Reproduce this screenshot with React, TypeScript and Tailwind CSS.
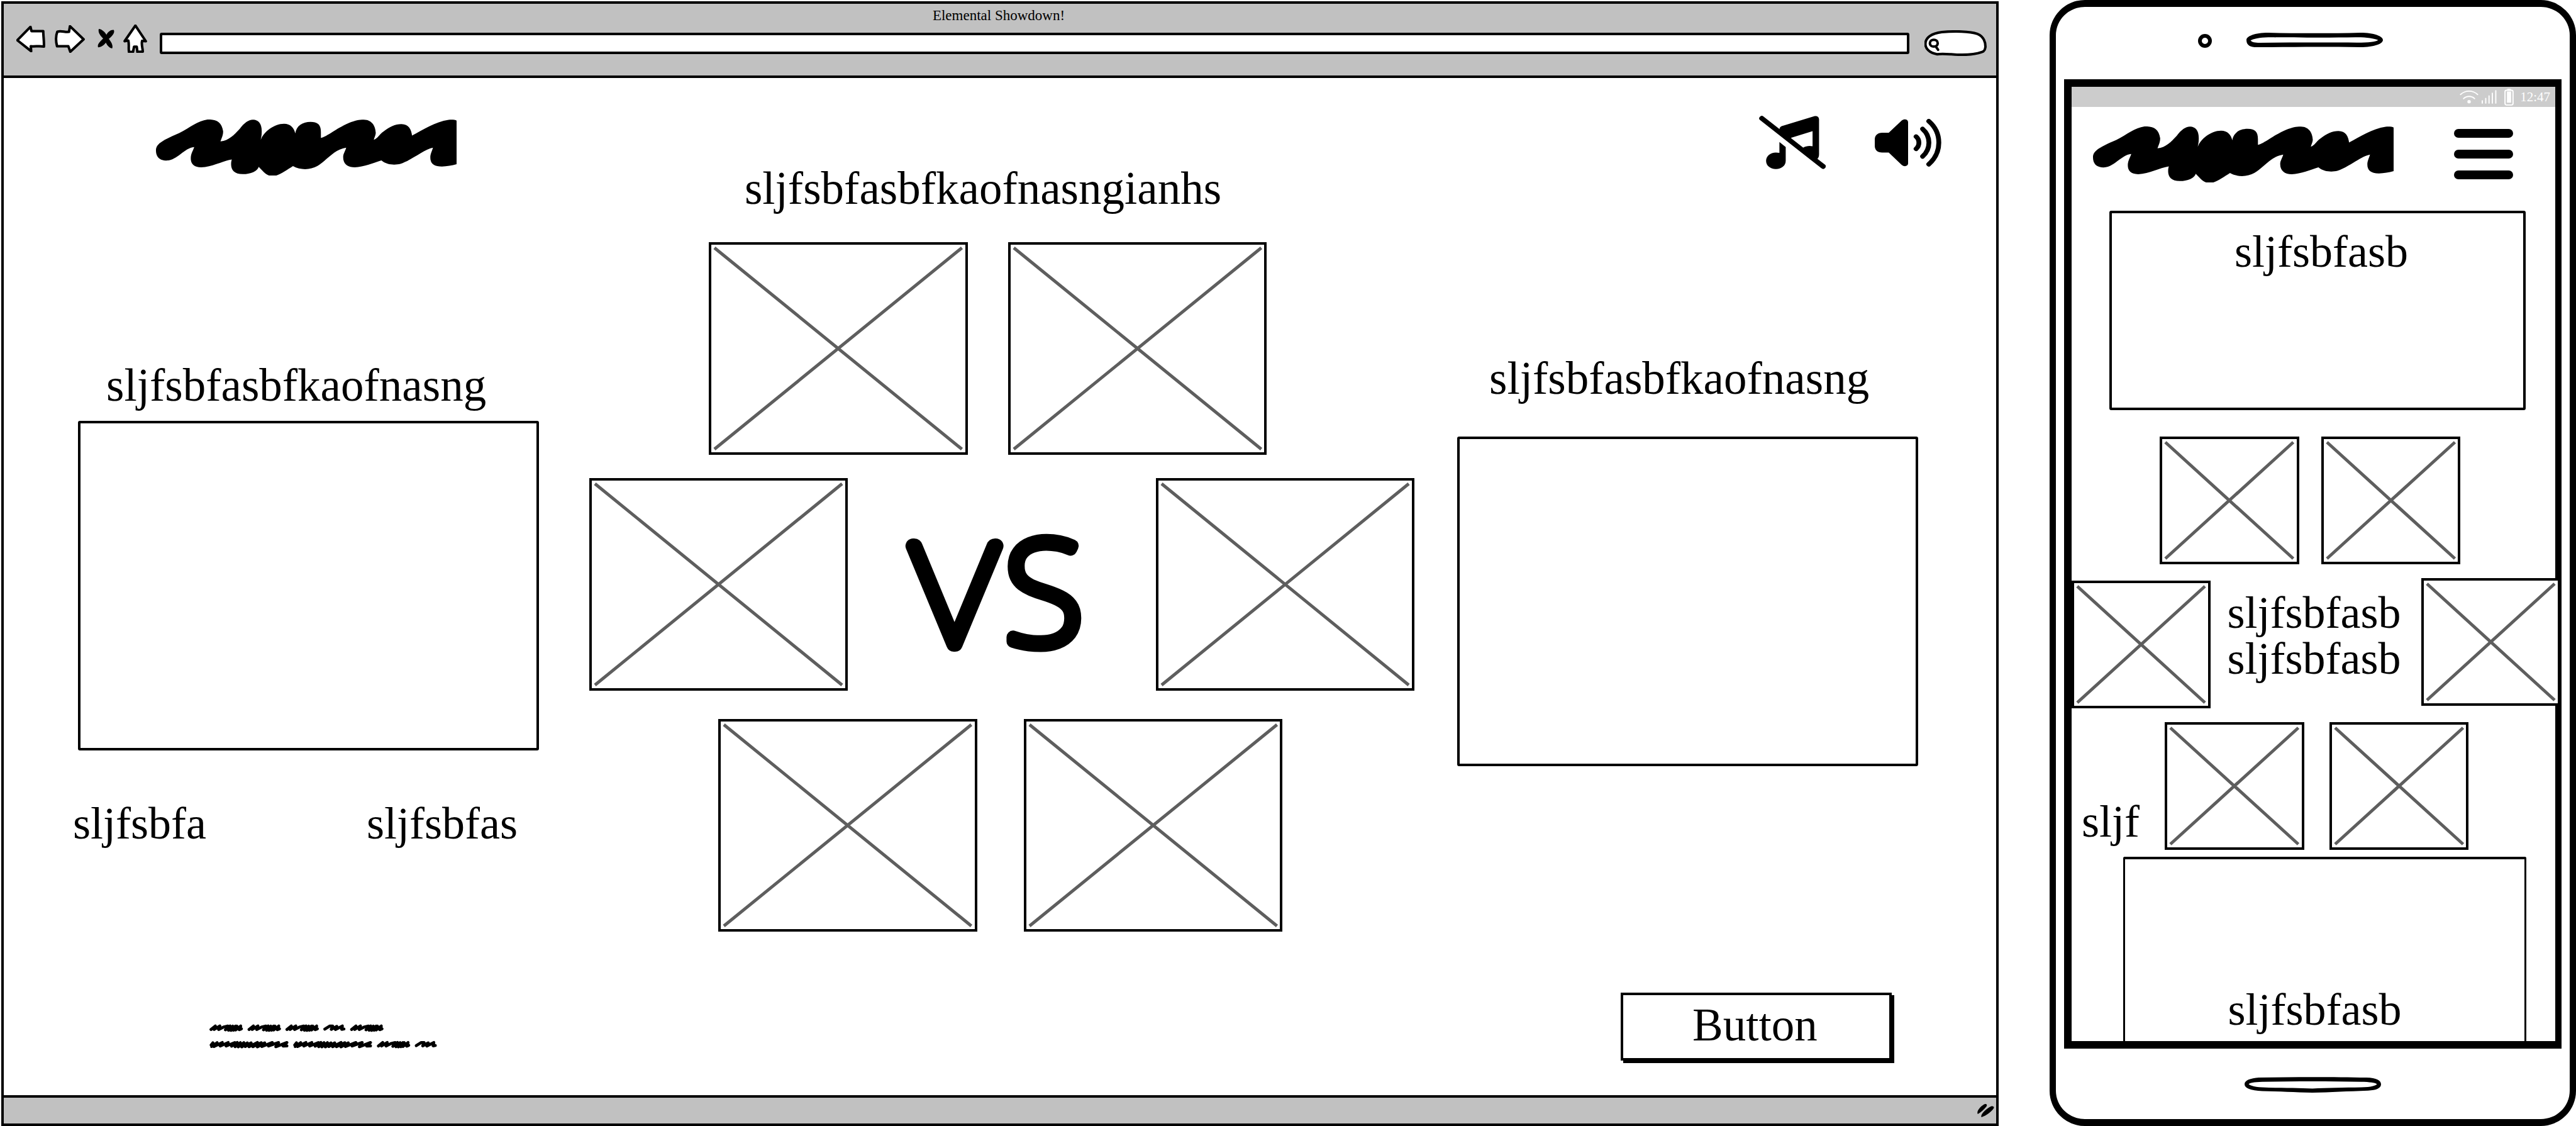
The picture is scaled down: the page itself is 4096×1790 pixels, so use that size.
import React from "react";

const INK = "#000";

function Scribble() {
  return (
    <svg
      className="block h-[89px] w-[478px] shrink-0"
      viewBox="470 692 904 322"
      preserveAspectRatio="none"
      role="img"
      aria-label="Logo"
    >
      <path
        fill={INK}
        d="M470 870C470 835 485 815 540 770C575 735 595 700 625 692C650 690 668 705 672 760C672 785 667 800 664 818C690 812 705 780 722 745C735 712 748 694 762 693C778 694 789 715 788 765C788 785 786 795 785 810C792 765 825 716 855 716C875 716 885 740 889 772C892 730 910 706 935 706C958 706 966 725 966 765C966 780 966 790 966 798C985 790 1010 745 1050 712C1070 697 1080 693 1095 693C1120 694 1130 730 1131 770C1130 785 1127 795 1125 808C1135 805 1140 780 1155 760C1170 735 1190 718 1208 718C1230 718 1238 750 1240 784C1270 755 1310 705 1350 694C1360 692 1370 694 1374 698L1374 949C1360 956 1345 962 1330 962C1305 962 1295 945 1295 910C1295 890 1300 875 1303 854C1275 865 1240 925 1205 947C1190 954 1165 955 1148 927C1125 940 1095 965 1068 967C1045 967 1032 945 1033 905C1033 890 1040 870 1042 854C1005 865 985 925 955 960C935 982 905 985 882 960C865 980 848 1005 832 1014L810 1014C798 1005 790 985 779 964C775 990 755 1006 731 1006C705 1006 695 980 696 945C696 935 697 930 698 922C670 930 640 965 606 967C580 966 573 940 575 905C576 885 583 865 585 850C555 855 535 925 502 928C480 928 470 905 470 870Z"
      />
    </svg>
  );
}

const MEDIUM_WORD =
  "M9 30L34 10L27 30L60 10L53 30L84 15L106 10L92 32L119 10L110 34L134 11L124 35L150 11L138 34L158 11L150 33L180 10L172 31L184 26";
const SHORT_WORD = "M9 28L38 10L54 10L46 29L78 12L70 30L110 10L106 29L119 27";
const LONG_WORD =
  "M10 24L20 12L13 33L44 11L26 33L74 10L62 30L108 10L96 30L146 10L128 31L160 10L148 34L178 11L166 35L198 11L186 35L218 12L206 33L240 12L228 34L276 10L250 34L298 11L276 35L318 12L302 33L362 10L340 30L398 10L382 34L446 10L424 30L446 29";

function ScribbledCopy() {
  const words = [
    { d: MEDIUM_WORD, x: 66, y: 113 },
    { d: MEDIUM_WORD, x: 285, y: 113 },
    { d: MEDIUM_WORD, x: 503, y: 113 },
    { d: SHORT_WORD, x: 721, y: 113 },
    { d: MEDIUM_WORD, x: 875, y: 113 },
    { d: LONG_WORD, x: 66, y: 208 },
    { d: LONG_WORD, x: 547, y: 208 },
    { d: MEDIUM_WORD, x: 1029, y: 208 },
    { d: SHORT_WORD, x: 1247, y: 208 },
  ];
  return (
    <svg className="block h-[39px] w-[362px]" viewBox="66 112 1310 141" role="img" aria-label="Footer note">
      {words.map((w, i) => (
        <path
          key={i}
          d={w.d}
          transform={`translate(${w.x} ${w.y})`}
          fill="none"
          stroke={INK}
          strokeWidth="17"
          strokeLinecap="round"
          strokeLinejoin="round"
        />
      ))}
    </svg>
  );
}

function BackIcon() {
  return (
    <svg className="block h-[42px] w-[46px]" viewBox="50 150 86 150" preserveAspectRatio="none">
      <path
        d="M53 232L92 156L95 180L130 180C130 210 133 240 132 268C118 262 106 269 93 266L94 294Z"
        fill="#fff"
        stroke={INK}
        strokeWidth="4"
        strokeLinejoin="round"
        vectorEffect="non-scaling-stroke"
      />
    </svg>
  );
}

function ForwardIcon() {
  return (
    <svg className="block h-[44px] w-12" viewBox="165 150 91 158" preserveAspectRatio="none">
      <path
        d="M211 156L252 231L212 302L206 270L172 270C168 240 168 210 173 187C185 180 195 191 208 188Z"
        fill="#fff"
        stroke={INK}
        strokeWidth="4"
        strokeLinejoin="round"
        vectorEffect="non-scaling-stroke"
      />
    </svg>
  );
}

function StopIcon() {
  return (
    <svg className="block h-[31px] w-[27px]" viewBox="294 162 51 114" preserveAspectRatio="none">
      <path
        fill={INK}
        d="M298 162C306 163 316 178 321 196C326 178 334 166 343 168C347 184 338 204 328 220C334 236 342 256 338 276C330 274 323 258 319 242C314 256 306 268 296 270C292 254 302 234 311 218C301 200 295 180 298 162Z"
      />
    </svg>
  );
}

function HomeIcon() {
  return (
    <svg className="block h-[45px] w-[38px]" viewBox="372 144 71 163" preserveAspectRatio="none">
      <path
        d="M408 150L439 240L428 238C425 260 430 280 430 300L414 302L412 272L404 272L401 302L389 302C387 280 390 260 387 236L376 240Z"
        fill="#fff"
        stroke={INK}
        strokeWidth="4"
        strokeLinejoin="round"
        vectorEffect="non-scaling-stroke"
      />
    </svg>
  );
}

function SearchPill() {
  return (
    <svg className="block h-[41px] w-[99px]" viewBox="1107 177 333 149" preserveAspectRatio="none">
      <g stroke={INK} strokeLinecap="round" strokeLinejoin="round">
        <path
          d="M1175 316C1130 308 1112 280 1112 257C1112 220 1145 195 1200 188C1270 181 1350 183 1390 198C1425 212 1434 250 1433 275C1430 295 1425 300 1415 303C1370 320 1310 322 1250 316C1220 314 1195 312 1175 316Z"
          fill="#fff"
          strokeWidth="4"
          vectorEffect="non-scaling-stroke"
        />
        <path
          d="M1168 272L1180 290M1136 252C1136 226 1178 226 1178 252C1178 278 1136 278 1136 252Z"
          fill="none"
          strokeWidth="4"
          vectorEffect="non-scaling-stroke"
        />
      </g>
    </svg>
  );
}

function MusicOffIcon() {
  return (
    <svg className="block h-[85px] w-[106px]" viewBox="217 668 360 308" preserveAspectRatio="none">
      <path d="M232 683L563 960" stroke={INK} strokeWidth="28" strokeLinecap="round" />
      <path
        fill={INK}
        d="M327 750C327 735 335 728 345 726L515 671C530 667 541 675 541 690L541 890C541 905 537 912 530 918L500 905L455 852C470 842 490 840 506 844L506 757L388 796L400 810L350 785Z"
      />
      <path
        fill={INK}
        d="M327 819L361 848L361 928C361 955 338 975 308 975C278 975 255 955 255 928C255 900 278 881 308 880L327 882Z"
      />
    </svg>
  );
}

function SpeakerIcon() {
  return (
    <svg className="block h-[76px] w-[106px]" viewBox="840 685 358 275" preserveAspectRatio="none">
      <path
        fill={INK}
        d="M915 765L985 694C998 683 1018 686 1019 703L1019 942C1018 958 998 962 985 950L915 879L880 879C855 879 840 865 840 840L840 804C840 780 855 765 880 765Z"
      />
      <g fill="none" stroke={INK} strokeWidth="26" strokeLinecap="round">
        <path d="M1062 787C1082 805 1082 838 1062 857" />
        <path d="M1097 743C1142 785 1142 858 1097 901" />
        <path d="M1130 698C1202 765 1202 878 1130 946" />
      </g>
    </svg>
  );
}

function ResizeMark() {
  return (
    <svg className="block h-[21px] w-[27px]" viewBox="1441 733 64 75" preserveAspectRatio="none">
      <path
        fill={INK}
        d="M1443 790C1436 775 1455 742 1470 733C1476 732 1480 738 1475 748C1466 766 1454 780 1443 790ZM1457 808C1450 795 1476 756 1493 746C1500 745 1506 748 1503 757C1494 778 1476 798 1457 808Z"
      />
    </svg>
  );
}

function MenuIcon() {
  return (
    <svg className="block h-20 w-[94px]" viewBox="0 0 94 80">
      <rect y="0" width="94" height="14" rx="7" />
      <rect y="33" width="94" height="14" rx="7" />
      <rect y="66" width="94" height="14" rx="7" />
    </svg>
  );
}

function ImageBox({ className }: { className: string }) {
  return (
    <div className={`border-4 border-black bg-white p-[5px] ${className}`} role="img" aria-label="Image placeholder">
      <svg className="block size-full overflow-visible" viewBox="0 0 100 100" preserveAspectRatio="none">
        <path
          d="M0 0L100 100M100 0L0 100"
          stroke="#5e5e5e"
          strokeWidth="5"
          vectorEffect="non-scaling-stroke"
          fill="none"
        />
      </svg>
    </div>
  );
}

function Versus() {
  return (
    <svg
      className="mr-[22px] mt-[92px] block h-[190px] w-[284px] overflow-visible"
      viewBox="0 0 284 190"
      fill={INK}
      stroke={INK}
      strokeLinejoin="round"
      fontWeight="100"
    >
      <text y="172">
        <tspan x="7" fontFamily="Lato, sans-serif" fontSize="222" strokeWidth="24">V</tspan>
        <tspan x="281" textAnchor="end" fontFamily="'Noto Sans', sans-serif" fontSize="226" strokeWidth="21">S</tspan>
      </text>
    </svg>
  );
}

function BrowserWindow() {
  return (
    <section className="flex min-w-0 flex-col border-4 border-black" aria-label="Desktop">
      <header className="border-b-4 border-black bg-[#c1c1c1] pb-6">
        <h1 className="pr-1 pt-[3px] text-center text-[23px] leading-[32px]">Elemental Showdown!</h1>
        <div className="flex h-[55px] items-center pl-5 pr-[15px]">
          <a href="#back" aria-label="Back" className="-mt-3.5"><BackIcon /></a>
          <a href="#forward" aria-label="Forward" className="-mt-3.5 ml-[15px]"><ForwardIcon /></a>
          <button type="button" aria-label="Stop" className="-mt-3.5 ml-5"><StopIcon /></button>
          <a href="#home" aria-label="Home" className="-mt-3.5 ml-[14px]"><HomeIcon /></a>
          <input
            type="text"
            aria-label="Address"
            className="ml-5 h-[34px] min-w-0 flex-1 rounded-[3px] border-4 border-black bg-white px-3 text-[21px] outline-none"
          />
          <button type="button" aria-label="Search" className="ml-6"><SearchPill /></button>
        </div>
      </header>

      <main className="grid flex-1 grid-cols-[925fr_1330fr_913fr] text-[73px] leading-[80px]">
        <div className="flex flex-col">
          <div className="pl-[242px] pt-[66px]"><Scribble /></div>
          <h2 className="mt-[294px] pl-[163px]">sljfsbfasbfkaofnasng</h2>
          <div className="ml-[118px] mr-[74px] mt-4 h-[524px] rounded-[3px] border-4 border-black" />
          <div className="mt-[76px] flex gap-[255px] pl-[110px] text-[72px]">
            <p>sljfsbfa</p>
            <p>sljfsbfas</p>
          </div>
          <div className="mt-[279px] pl-[327px]"><ScribbledCopy /></div>
        </div>

        <div className="flex flex-col">
          <h2 className="pr-[66px] pt-[136px] text-center">sljfsbfasbfkaofnasngianhs</h2>
          <div className="mt-[45px] flex gap-16 pl-[196px] pr-[247px]">
            <ImageBox className="h-[338px] flex-1" />
            <ImageBox className="h-[338px] flex-1" />
          </div>
          <div className="mt-[37px] flex justify-between pl-[6px] pr-3">
            <ImageBox className="h-[338px] w-[411px]" />
            <Versus />
            <ImageBox className="h-[338px] w-[411px]" />
          </div>
          <div className="mt-[45px] flex gap-[74px] pl-[211px] pr-[222px]">
            <ImageBox className="h-[338px] flex-1" />
            <ImageBox className="h-[338px] flex-1" />
          </div>
        </div>

        <div className="flex flex-col">
          <div className="flex justify-end gap-[78px] pr-[87px] pt-[60px]">
            <button type="button" aria-label="Music off"><MusicOffIcon /></button>
            <button type="button" aria-label="Sound on"><SpeakerIcon /></button>
          </div>
          <h2 className="mt-[293px] pl-[107px]">sljfsbfasbfkaofnasng</h2>
          <div className="ml-[56px] mr-[124px] mt-[52px] h-[524px] rounded-[3px] border-4 border-black" />
          <div className="mt-[360px] flex justify-end pr-[166px]">
            <button
              type="button"
              className="h-[108px] w-[431px] border-4 border-black bg-white pb-1 pr-1 shadow-[4px_4px_0_#000]"
            >
              Button
            </button>
          </div>
        </div>
      </main>

      <footer className="flex h-[45px] items-center justify-end border-t-4 border-black bg-[#c1c1c1] pr-[3px]">
        <ResizeMark />
      </footer>
    </section>
  );
}

function StatusBar() {
  return (
    <div className="flex h-8 items-center justify-end bg-[#ccc] pr-2 text-[21px] leading-[32px] text-white">
      <svg className="h-[22px] w-[30px]" viewBox="71 68 110 80" fill="none" stroke="#fff" strokeWidth="7" strokeLinecap="round">
        <path d="M76 94C105 68 147 68 176 94M94 118C112 101 140 101 158 118" />
        <circle cx="126" cy="136" r="10" fill="#fff" stroke="none" />
      </svg>
      <svg className="ml-[5px] h-[22px] w-6" viewBox="198 68 86 80" stroke="#fff" strokeWidth="7" strokeLinecap="round">
        <path d="M201 131V144M221 117V144M240 102V144M259 87V144M279 72V144" />
      </svg>
      <svg className="ml-3 h-[27px] w-[15px]" viewBox="327 60 54 97">
        <rect x="343" y="60" width="22" height="12" rx="5" fill="#fff" />
        <rect x="331" y="69" width="46" height="84" rx="9" fill="none" stroke="#fff" strokeWidth="7" />
        <rect x="342" y="76" width="24" height="64" fill="#fff" />
      </svg>
      <span className="ml-[10px]">12:47</span>
    </div>
  );
}

function Phone() {
  return (
    <section
      className="flex min-w-0 flex-col rounded-[56px] border-x-[10px] border-y-[11px] border-black px-[13px]"
      aria-label="Mobile"
    >
      <div className="flex h-[115px] items-start pl-[213px] pt-[41px]">
        <svg className="mt-0.5 h-[22px] w-[22px]" viewBox="0 0 22 22">
          <ellipse cx="11" cy="11" rx="8" ry="8" fill="#fff" stroke={INK} strokeWidth="6" />
        </svg>
        <svg className="ml-[55px] h-[23px] w-[217px]" viewBox="601 188 400 80" preserveAspectRatio="none">
          <path
            fillRule="evenodd"
            d="M601 228C601 208 625 188 665 188C750 192 850 192 935 188C975 188 1001 208 1001 228C1001 250 975 268 935 268C830 265 740 266 635 269C610 269 601 255 601 228ZM613 231C618 242 625 243 640 244C740 242 840 242 925 243C960 243 980 238 987 229C975 218 950 212 920 213C840 216 740 214 665 213C640 214 620 222 613 231Z"
          />
        </svg>
      </div>

      <div className="flex flex-1 flex-col border-y-[12px] border-l-[12px] border-r-[10px] border-black text-[72px] leading-[73px]">
        <StatusBar />
        <div className="flex items-start justify-between pl-[34px] pr-[67px] pt-[31px]">
          <Scribble />
          <button type="button" aria-label="Menu" className="mt-1"><MenuIcon /></button>
        </div>

        <div className="ml-[60px] mr-[47px] mt-[45px] h-[317px] rounded-[3px] border-4 border-black pl-3 pt-[25px] text-center">
          sljfsbfasb
        </div>

        <div className="mt-[42px] flex gap-[35px] pl-[140px] pr-[151px]">
          <ImageBox className="h-[203px] flex-1" />
          <ImageBox className="h-[203px] flex-1" />
        </div>

        <div className="-mr-2 mt-[22px] flex justify-between">
          <ImageBox className="mt-1 h-[203px] w-[221px]" />
          <div className="pr-1.5 pt-[19px]">
            <p>sljfsbfasb</p>
            <p>sljfsbfasb</p>
          </div>
          <ImageBox className="relative h-[203px] w-[221px]" />
        </div>

        <div className="mt-[22px] flex pl-4 pr-[138px]">
          <p className="pt-[122px]">sljf</p>
          <ImageBox className="ml-10 h-[203px] flex-1" />
          <ImageBox className="ml-10 h-[203px] flex-1" />
        </div>

        <div className="ml-[82px] mr-[46px] mt-[11px] flex-1 rounded-t-[3px] border-x-[3px] border-t-4 border-black pb-2 pr-8 pt-[203px] text-center">
          sljfsbfasb
        </div>
      </div>

      <div className="flex h-[112px] items-start justify-center pt-[45px]">
        <svg className="h-[25px] w-[217px]" viewBox="598 1354 400 68" preserveAspectRatio="none">
          <path
            fillRule="evenodd"
            d="M598 1385C598 1370 615 1359 640 1357C740 1354 860 1354 955 1357C985 1358 998 1370 998 1386C998 1402 985 1412 960 1413C900 1416 850 1420 797 1422C745 1420 700 1416 650 1415C615 1412 598 1402 598 1385ZM610 1385C620 1396 640 1399 670 1400C720 1401 760 1402 797 1404C840 1402 890 1400 940 1399C970 1397 982 1392 986 1385C980 1378 965 1376 940 1375C850 1372 745 1372 650 1375C625 1376 613 1379 610 1385Z"
          />
        </svg>
      </div>
    </section>
  );
}

export default function App() {
  return (
    <div className="grid min-h-screen grid-cols-[3176fr_837fr] gap-x-[81px] overflow-hidden bg-white pl-[2px] font-['Liberation_Serif',serif] text-black">
      <div className="grid pt-[2px]"><BrowserWindow /></div>
      <Phone />
    </div>
  );
}
